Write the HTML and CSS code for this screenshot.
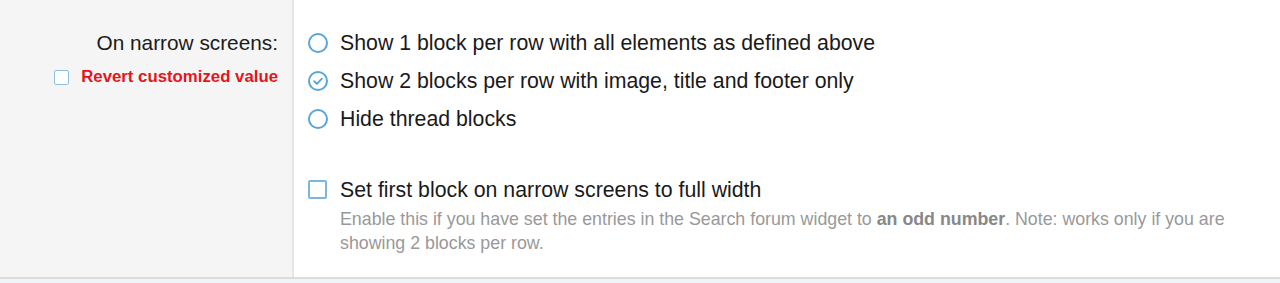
FILE: index.html
```html
<!DOCTYPE html>
<html>
<head>
<meta charset="utf-8">
<link rel="stylesheet" href="styles.css">
</head>
<body>
<div class="row">
  <div class="label-col">
    <div class="label">On narrow screens:</div>
    <label class="revert"><span class="cb cb-small"></span><span class="revert-text">Revert customized value</span></label>
  </div>
  <div class="control-col">
    <ul class="radios">
      <li><span class="radio"></span><span>Show 1 block per row with all elements as defined above</span></li>
      <li><span class="radio checked"><svg viewBox="0 0 20 20" width="20" height="20"><circle cx="10" cy="10" r="9" fill="none" stroke="#5aa5d8" stroke-width="2"/><path d="M6.2 10.3 L8.9 12.9 L13.9 7.7" fill="none" stroke="#5aa5d8" stroke-width="1.9" stroke-linecap="round" stroke-linejoin="round"/></svg></span><span>Show 2 blocks per row with image, title and footer only</span></li>
      <li><span class="radio"></span><span>Hide thread blocks</span></li>
    </ul>
    <div class="check-row">
      <span class="cb"></span>
      <div class="check-body">
        <div class="check-label">Set first block on narrow screens to full width</div>
        <p class="hint">Enable this if you have set the entries in the Search forum widget to <b>an odd number</b>. Note: works only if you are showing 2 blocks per row.</p>
      </div>
    </div>
  </div>
</div>
<div class="footer-strip"></div>
</body>
</html>
```

FILE: styles.css
```css
html, body {
  margin: 0;
  padding: 0;
  background: #fff;
  font-family: "Liberation Sans", Arial, sans-serif;
  color: #1a1a1a;
}
.row {
  display: flex;
  height: 277px;
  border-bottom: 2px solid #dcdcdc;
}
.label-col {
  width: 294px;
  flex: none;
  box-sizing: border-box;
  background: #f5f5f5;
  border-right: 2px solid #e6e6e6;
  padding: 31px 14px 0 0;
  display: flex;
  flex-direction: column;
  align-items: flex-end;
}
.label {
  font-size: 20.8px;
  line-height: 24px;
  color: #1b1b1b;
}
.revert {
  display: flex;
  align-items: center;
  margin-top: 12px;
  gap: 12px;
  height: 20px;
}
.revert-text {
  color: #e4161b;
  font-weight: bold;
  font-size: 16.8px;
  line-height: 20px;
}
.cb {
  display: inline-block;
  box-sizing: border-box;
  width: 19px;
  height: 19px;
  border: 2px solid #7ab7e0;
  border-radius: 2px;
  background: #fff;
  flex: none;
}
.cb-small {
  width: 15px;
  height: 15px;
  border-width: 1.5px;
  border-color: #8bbfe3;
}
.control-col {
  flex: 1;
  padding: 24px 0 0 14px;
}
.radios {
  list-style: none;
  margin: 0;
  padding: 0;
}
.radios li {
  display: flex;
  align-items: center;
  gap: 12px;
  font-size: 21.3px;
  line-height: 26px;
  height: 38px;
}
.radio {
  box-sizing: border-box;
  width: 20px;
  height: 20px;
  border: 2px solid #5aa5d8;
  border-radius: 50%;
  flex: none;
  display: inline-flex;
}
.radio.checked {
  border: none;
}
.check-row {
  display: flex;
  gap: 13px;
  margin-top: 39px;
}
.check-row .cb {
  margin-top: 3px;
}
.check-label {
  font-size: 21.3px;
  line-height: 26px;
}
.hint {
  font-size: 17.8px;
  line-height: 24px;
  color: #999;
  margin: 4px 0 0;
  max-width: 905px;
}
.hint b {
  color: #888;
}
.footer-strip {
  height: 4px;
  background: #edf5fb;
}
```
